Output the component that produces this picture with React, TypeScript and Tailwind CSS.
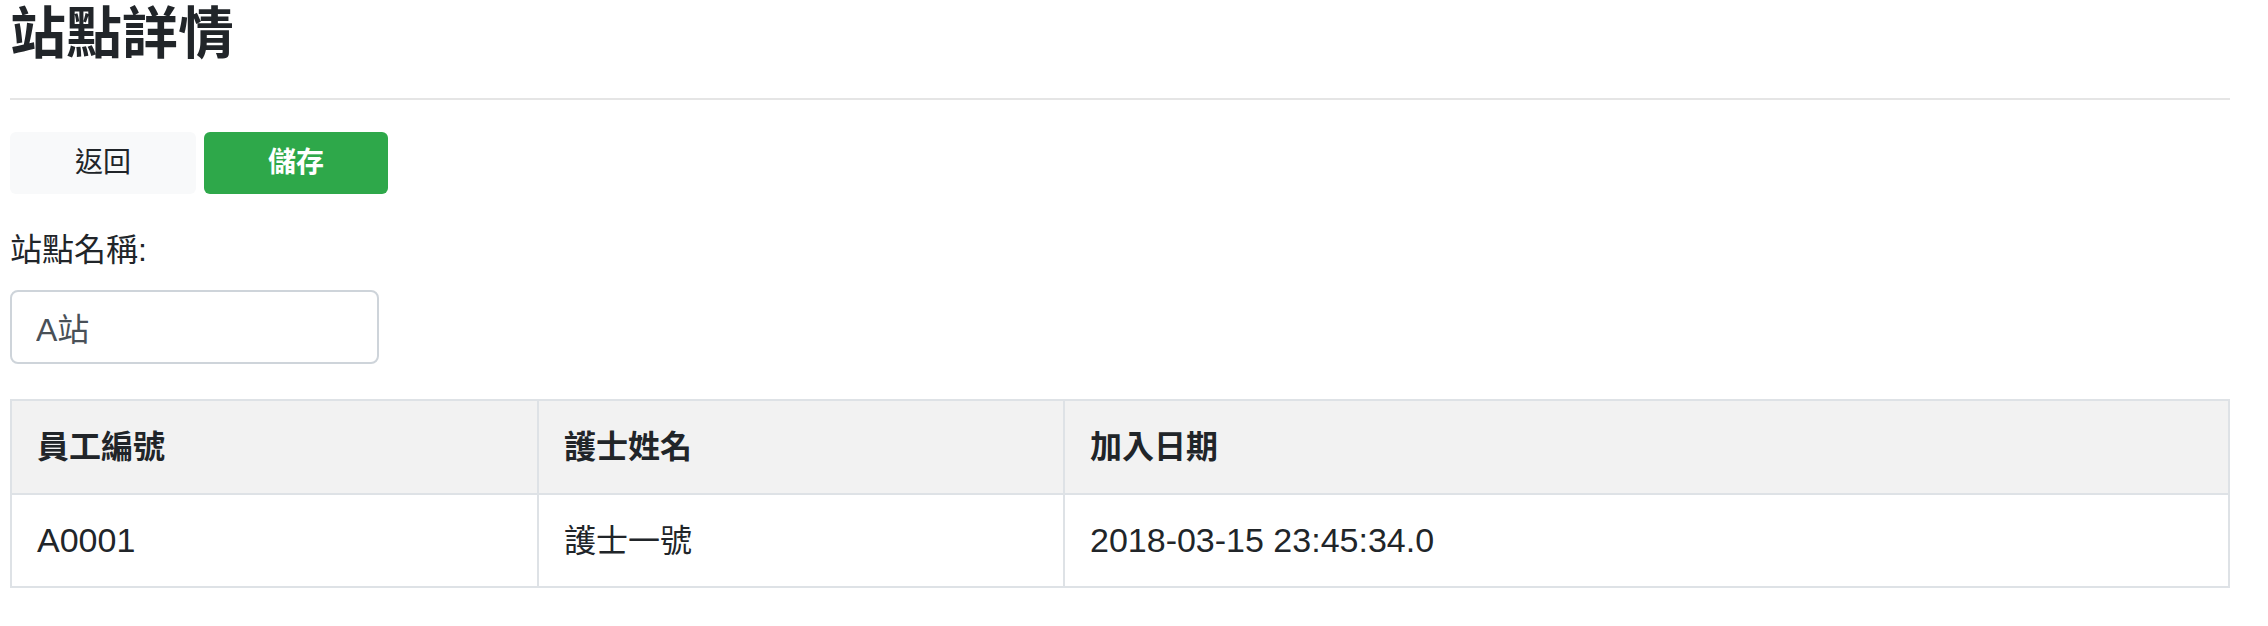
import React from "react";

const rows = [
  { id: "A0001", name: "護士一號", joined: "2018-03-15 23:45:34.0" },
];

const App: React.FC = () => {
  return (
    <div
      className="min-h-[626px] bg-white pl-[10px] text-[#212529]"
      style={{ fontFamily: '"Liberation Sans", "Noto Sans CJK TC", sans-serif' }}
    >
      <div className="w-[2220px]">
        <h1 className="text-[56px] leading-[67px] font-semibold">站點詳情</h1>
        <hr className="mt-[31px] border-t-2 border-[#e5e5e5]" />

        <div className="mt-[32px] flex gap-2">
          <button className="h-[62px] w-[186px] rounded-[6px] bg-[#f8f9fa] text-[28px] text-[#212529]">
            返回
          </button>
          <button className="h-[62px] w-[184px] rounded-[6px] bg-[#2ea84a] text-[28px] font-semibold text-white">
            儲存
          </button>
        </div>

        <label className="mt-[32px] block text-[32px] leading-[48px]">站點名稱:</label>
        <input
          className="mt-[16px] block h-[74px] w-[369px] rounded-[8px] border-2 border-[#ced4da] px-[24px] text-[32px] text-[#495057] outline-none"
          defaultValue="A站"
        />

        <table className="mt-[35px] w-[2220px] table-fixed border-collapse text-[32px]">
          <colgroup>
            <col className="w-[527px]" />
            <col className="w-[526px]" />
            <col />
          </colgroup>
          <thead>
            <tr className="h-[94px] bg-[#f2f2f2]">
              <th className="border-2 border-[#dee2e6] px-[25px] text-left font-bold">員工編號</th>
              <th className="border-2 border-[#dee2e6] px-[25px] text-left font-bold">護士姓名</th>
              <th className="border-2 border-[#dee2e6] px-[25px] text-left font-bold">加入日期</th>
            </tr>
          </thead>
          <tbody>
            {rows.map((r) => (
              <tr key={r.id} className="h-[93px]">
                <td className="border-2 border-[#dee2e6] px-[25px] text-[34px]">{r.id}</td>
                <td className="border-2 border-[#dee2e6] px-[25px]">{r.name}</td>
                <td className="border-2 border-[#dee2e6] px-[25px] text-[34px]">{r.joined}</td>
              </tr>
            ))}
          </tbody>
        </table>
      </div>
    </div>
  );
};

export default App;
